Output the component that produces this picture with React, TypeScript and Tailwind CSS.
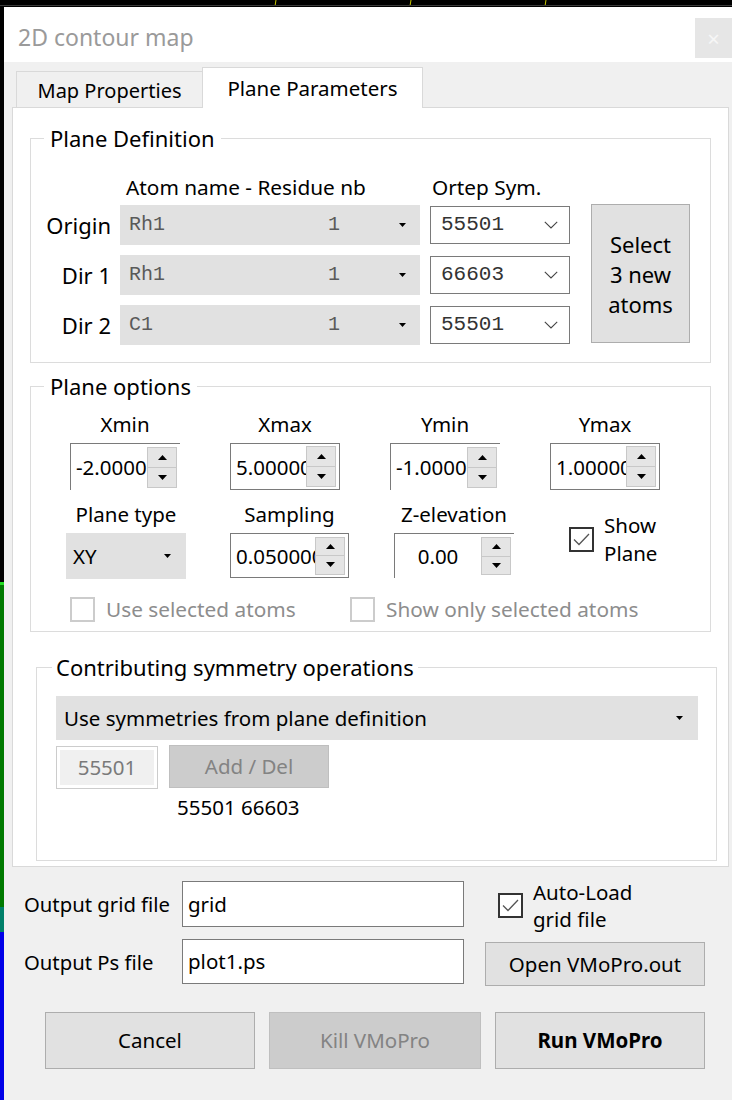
import React from "react";

const SANS = "font-['Noto_Sans',sans-serif]";
const MONO = "font-['Liberation_Mono',monospace]";

function ComboTri() {
  return (
    <svg width="7" height="4" viewBox="0 0 7 4">
      <path d="M0 0H7L3.5 4Z" fill="#000" />
    </svg>
  );
}

function Chevron() {
  return (
    <svg width="14" height="8" viewBox="0 0 14 8">
      <path d="M0.8 0.8L7 7L13.2 0.8" fill="none" stroke="#444" strokeWidth="1.1" />
    </svg>
  );
}

function SpinButtons({ h }: { h: string }) {
  return (
    <div className={`flex flex-col w-[30px] ${h} border border-[#c8c8c8] bg-[#e5e5e5]`}>
      <div className="flex-1 flex items-center justify-center border-b border-[#c8c8c8]">
        <svg width="9" height="5" viewBox="0 0 9 5">
          <path d="M0 5L4.5 0L9 5Z" fill="#000" />
        </svg>
      </div>
      <div className="flex-1 flex items-center justify-center">
        <svg width="9" height="5" viewBox="0 0 9 5">
          <path d="M0 0H9L4.5 5Z" fill="#000" />
        </svg>
      </div>
    </div>
  );
}

function SpinBox({
  value,
  w,
  h,
  full,
  spinH,
  center,
}: {
  value: string;
  w: string;
  h: string;
  full: boolean;
  spinH: string;
  center?: boolean;
}) {
  return (
    <div
      className={`flex items-center bg-white ${w} ${h} ${
        full ? "border border-[#7a7a7a]" : "border-t border-l border-[#7a7a7a]"
      }`}
    >
      <div
        className={`flex-1 overflow-hidden whitespace-nowrap text-[20.5px] leading-[26px] text-black ${
          center ? "text-center" : "pl-[5px]"
        }`}
      >
        {value}
      </div>
      <div className="mr-[3px]">
        <SpinButtons h={spinH} />
      </div>
    </div>
  );
}

function CheckBox({ checked, disabled }: { checked: boolean; disabled?: boolean }) {
  return (
    <div
      className={`w-[25px] h-[25px] shrink-0 border-2 ${
        disabled ? "border-[#cccccc]" : "border-[#333333]"
      } bg-white flex items-center justify-center`}
    >
      {checked && (
        <svg width="17" height="13" viewBox="0 0 17 13">
          <path d="M1 6.5L6 11.5L16 1" fill="none" stroke="#555" strokeWidth="1.3" />
        </svg>
      )}
    </div>
  );
}

function AtomRow({ label, atom, sym }: { label: string; atom: string; sym: string }) {
  return (
    <div className="flex items-center h-[40px]">
      <div className="w-[80px] text-right text-[22px] leading-[30px] text-black">{label}</div>
      <div className="ml-[9px] w-[300px] h-[40px] bg-[#e1e1e1] flex items-center">
        <span className={`${MONO} w-[208px] pl-[9px] text-[20px] text-[#5a5a5a]`}>{atom}</span>
        <span className={`${MONO} text-[20px] text-[#5a5a5a]`}>1</span>
        <span className="ml-auto mr-[14px] flex">
          <ComboTri />
        </span>
      </div>
      <div className="ml-[10px] w-[140px] h-[38px] bg-white border border-[#7a7a7a] flex items-center">
        <span className={`${MONO} pl-[10px] text-[21px] text-[#333]`}>{sym}</span>
        <span className="ml-auto mr-[11px] flex">
          <Chevron />
        </span>
      </div>
    </div>
  );
}

export default function App() {
  return (
    <div className={`w-[732px] h-[1100px] bg-black flex flex-col overflow-hidden ${SANS}`}>
      {/* background canvas top */}
      <svg width="732" height="7" viewBox="0 0 732 7" className="shrink-0 block">
        <rect width="732" height="7" fill="#000" />
        <line x1="276" y1="0" x2="275" y2="6" stroke="#c8c800" strokeWidth="1" />
        <line x1="411" y1="0" x2="410" y2="6" stroke="#c8c800" strokeWidth="1" />
        <line x1="546" y1="0" x2="545" y2="6" stroke="#c8c800" strokeWidth="1" />
        <rect y="5" width="732" height="1" fill="#3a3a3a" />
      </svg>
      <div className="flex flex-1">
        {/* background canvas left */}
        <svg width="4" height="1093" viewBox="0 0 4 1093" className="shrink-0 block">
          <rect width="4" height="1093" fill="#000" />
          <rect y="575" width="4" height="3" fill="#22dd22" />
          <rect y="578" width="4" height="322" fill="#007a00" />
          <rect y="900" width="4" height="25" fill="#00806a" />
          <rect y="925" width="4" height="168" fill="#0000e8" />
        </svg>

        {/* dialog */}
        <div className="flex-1 flex flex-col bg-[#f0f0f0]">
          {/* title bar */}
          <div className="h-[55px] shrink-0 bg-white flex items-start">
            <div className="pl-[14px] pt-[14px] text-[23px] leading-[32px] text-[#9a9a9a]">
              2D contour map
            </div>
            <div className="ml-auto mt-[11px] w-[37px] h-[40px] bg-[#e6e6e6] flex items-center justify-center text-[22px] text-[#f6f6f6]">
              ×
            </div>
          </div>

          {/* tabs */}
          <div className="ml-[8px] w-[717px] h-[46px] shrink-0 flex items-end">
            <div className="w-[4px] border-b border-[#d9d9d9]" />
            <div className="w-[186px] h-[37px] border-t border-l border-b border-[#d9d9d9] bg-[#f0f0f0] flex items-center justify-center pt-[3px] text-[20px] text-black">
              Map Properties
            </div>
            <div className="w-[221px] h-[41px] border-t border-l border-r border-[#d9d9d9] bg-white flex items-center justify-center text-[20.5px] text-black">
              Plane Parameters
            </div>
            <div className="flex-1 border-b border-[#d9d9d9]" />
          </div>

          {/* pane */}
          <div className="ml-[8px] w-[717px] h-[759px] shrink-0 bg-white border border-t-0 border-[#d9d9d9] flex flex-col">
            {/* Plane Definition */}
            <fieldset className="ml-[17px] mt-[16px] w-[681px] border border-[#dcdcdc] pb-[17px]">
              <legend className="ml-[13px] px-[6px] text-[22px] leading-[28px] text-black">
                Plane Definition
              </legend>
              <div className="mt-[22px] flex text-[20.8px] leading-[26px] text-black">
                <div className="w-[95px]" />
                <div className="w-[306px]">Atom name - Residue nb</div>
                <div>Ortep Sym.</div>
              </div>
              <div className="mt-[4px] flex items-start">
                <div className="flex flex-col gap-[10px] pt-[1px]">
                  <AtomRow label="Origin" atom="Rh1" sym="55501" />
                  <AtomRow label="Dir 1" atom="Rh1" sym="66603" />
                  <AtomRow label="Dir 2" atom="C1" sym="55501" />
                </div>
                <div className="ml-[21px] w-[99px] h-[139px] bg-[#e1e1e1] border border-[#adadad] flex items-center justify-center text-center text-[22px] leading-[30px] text-black">
                  Select
                  <br />3 new
                  <br />
                  atoms
                </div>
              </div>
            </fieldset>

            {/* Plane options */}
            <fieldset className="ml-[17px] mt-[9px] w-[681px] border border-[#dcdcdc] pb-[9px]">
              <legend className="ml-[13px] px-[6px] text-[22px] leading-[28px] text-black">
                Plane options
              </legend>
              <div className="mt-[11px] ml-[39px] flex gap-[50px]">
                {[
                  ["Xmin", "-2.000000", false],
                  ["Xmax", "5.000000", true],
                  ["Ymin", "-1.000000", false],
                  ["Ymax", "1.000000", true],
                ].map(([lab, val, full]) => (
                  <div key={lab as string} className="w-[110px] flex flex-col items-center">
                    <div className="text-[20.5px] leading-[26px] text-black">{lab}</div>
                    <div className="mt-[6px]">
                      <SpinBox
                        value={val as string}
                        w="w-[110px]"
                        h="h-[47px]"
                        full={full as boolean}
                        spinH="h-[41px]"
                      />
                    </div>
                  </div>
                ))}
              </div>
              <div className="mt-[11px] flex items-start">
                <div className="ml-[35px] w-[120px] flex flex-col items-center">
                  <div className="text-[20.5px] leading-[26px] text-black">Plane type</div>
                  <div className="mt-[6px] w-[120px] h-[46px] bg-[#e1e1e1] flex items-center">
                    <span className="pl-[7px] text-[20.5px] text-black">XY</span>
                    <span className="ml-auto mr-[15px] flex">
                      <ComboTri />
                    </span>
                  </div>
                </div>
                <div className="ml-[44px] w-[119px] flex flex-col items-center">
                  <div className="text-[20.5px] leading-[26px] text-black">Sampling</div>
                  <div className="mt-[6px]">
                    <SpinBox value="0.0500000" w="w-[119px]" h="h-[45px]" full spinH="h-[38px]" />
                  </div>
                </div>
                <div className="ml-[45px] w-[120px] flex flex-col items-center">
                  <div className="text-[20.5px] leading-[26px] text-black">Z-elevation</div>
                  <div className="mt-[6px]">
                    <SpinBox value="0.00" w="w-[120px]" h="h-[45px]" full={false} spinH="h-[38px]" center />
                  </div>
                </div>
                <div className="ml-[55px] mt-[10px] flex items-center">
                  <CheckBox checked />
                  <div className="ml-[10px] text-[20.5px] leading-[28px] text-black">
                    Show
                    <br />
                    Plane
                  </div>
                </div>
              </div>
              <div className="mt-[17px] flex items-center">
                <div className="ml-[39px] w-[280px] flex items-center">
                  <CheckBox checked={false} disabled />
                  <span className="ml-[11px] text-[20.8px] leading-[26px] text-[#8d8d8d]">
                    Use selected atoms
                  </span>
                </div>
                <CheckBox checked={false} disabled />
                <span className="ml-[11px] text-[20.8px] leading-[26px] text-[#8d8d8d]">
                  Show only selected atoms
                </span>
              </div>
            </fieldset>

            {/* Contributing symmetry operations */}
            <fieldset className="ml-[23px] mt-[21px] w-[681px] border border-[#dcdcdc] pb-[40px]">
              <legend className="ml-[15px] px-[4px] text-[22px] leading-[28px] text-black">
                Contributing symmetry operations
              </legend>
              <div className="mt-[15px] ml-[19px] w-[642px] h-[44px] bg-[#e1e1e1] flex items-center">
                <span className="pl-[8px] text-[20.5px] text-black">
                  Use symmetries from plane definition
                </span>
                <span className="ml-auto mr-[15px] flex">
                  <ComboTri />
                </span>
              </div>
              <div className="mt-[5px] ml-[19px] flex items-start">
                <div className="mt-[1px] w-[102px] h-[43px] border border-[#cccccc] p-[3px] bg-white">
                  <div className="w-full h-full bg-[#f0f0f0] flex items-center justify-center text-[20.5px] text-[#7a7a7a]">
                    55501
                  </div>
                </div>
                <div className="ml-[11px] w-[160px] h-[43px] bg-[#cccccc] border border-[#bfbfbf] flex items-center justify-center text-[20.5px] text-[#838383]">
                  Add / Del
                </div>
              </div>
              <div className="mt-[5px] ml-[140px] text-[20.5px] leading-[26px] text-black">
                55501 66603
              </div>
            </fieldset>
          </div>

          {/* output files */}
          <div className="mt-[14px] h-[46px] shrink-0 pl-[20px] flex items-center">
            <div className="w-[158px] text-[20.3px] leading-[26px] text-black">Output grid file</div>
            <div className="w-[282px] h-[46px] bg-white border border-[#7a7a7a] flex items-center pl-[5px] text-[20.5px] text-black">
              grid
            </div>
            <div className="ml-[34px] flex items-center pt-[3px]">
              <CheckBox checked />
              <div className="ml-[10px] text-[20.5px] leading-[27px] text-black">
                Auto-Load
                <br />
                grid file
              </div>
            </div>
          </div>
          <div className="mt-[12px] pl-[20px] flex items-start shrink-0">
            <div className="w-[158px] h-[45px] flex items-center text-[20.3px] leading-[26px] text-black">
              Output Ps file
            </div>
            <div className="w-[282px] h-[45px] bg-white border border-[#7a7a7a] flex items-center pl-[5px] text-[20.5px] text-black">
              plot1.ps
            </div>
            <div className="ml-[21px] mt-[3px] w-[220px] h-[44px] bg-[#e1e1e1] border border-[#adadad] flex items-center justify-center text-[20.5px] text-black">
              Open VMoPro.out
            </div>
          </div>

          {/* buttons */}
          <div className="mt-[26px] pl-[41px] flex gap-[14px] shrink-0">
            <div className="w-[210px] h-[57px] bg-[#e1e1e1] border border-[#adadad] flex items-center justify-center text-[20.5px] text-black">
              Cancel
            </div>
            <div className="w-[212px] h-[57px] bg-[#cccccc] border border-[#bfbfbf] flex items-center justify-center text-[20.5px] text-[#838383]">
              Kill VMoPro
            </div>
            <div className="w-[210px] h-[57px] bg-[#e1e1e1] border border-[#adadad] flex items-center justify-center text-[20.5px] font-bold text-black">
              Run VMoPro
            </div>
          </div>
        </div>
      </div>
    </div>
  );
}
